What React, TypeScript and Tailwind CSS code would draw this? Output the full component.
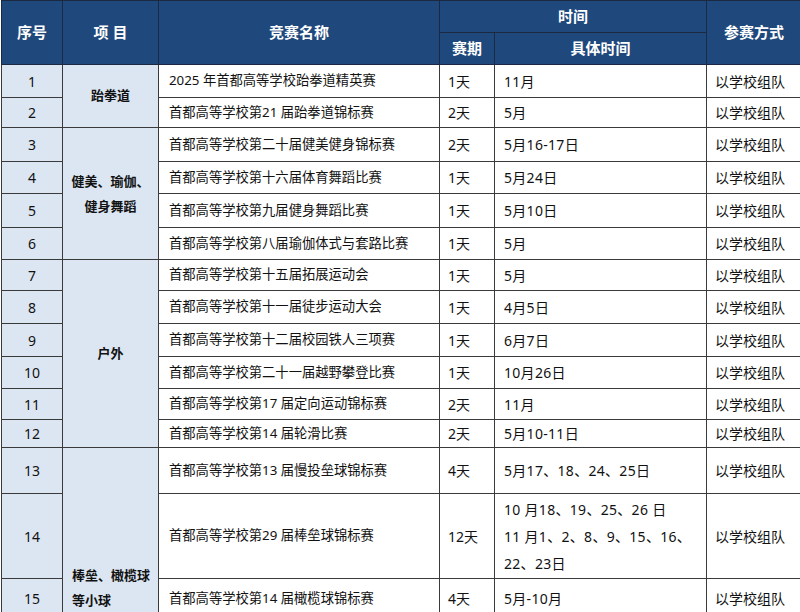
import React from 'react';

type Row = {
  no: number;
  name: string;
  days: string;
  time: React.ReactNode;
  h: string;
};

const rows: Row[] = [
  { no: 1, name: '2025 年首都高等学校跆拳道精英赛', days: '1天', time: '11月', h: 'h-[33px]' },
  { no: 2, name: '首都高等学校第21 届跆拳道锦标赛', days: '2天', time: '5月', h: 'h-[30px]' },
  { no: 3, name: '首都高等学校第二十届健美健身锦标赛', days: '2天', time: '5月16-17日', h: 'h-[34px]' },
  { no: 4, name: '首都高等学校第十六届体育舞蹈比赛', days: '1天', time: '5月24日', h: 'h-[32px]' },
  { no: 5, name: '首都高等学校第九届健身舞蹈比赛', days: '1天', time: '5月10日', h: 'h-[34px]' },
  { no: 6, name: '首都高等学校第八届瑜伽体式与套路比赛', days: '1天', time: '5月', h: 'h-[32px]' },
  { no: 7, name: '首都高等学校第十五届拓展运动会', days: '1天', time: '5月', h: 'h-[31px]' },
  { no: 8, name: '首都高等学校第十一届徒步运动大会', days: '1天', time: '4月5日', h: 'h-[33px]' },
  { no: 9, name: '首都高等学校第十二届校园铁人三项赛', days: '1天', time: '6月7日', h: 'h-[33px]' },
  { no: 10, name: '首都高等学校第二十一届越野攀登比赛', days: '1天', time: '10月26日', h: 'h-[32px]' },
  { no: 11, name: '首都高等学校第17 届定向运动锦标赛', days: '2天', time: '11月', h: 'h-[31px]' },
  { no: 12, name: '首都高等学校第14 届轮滑比赛', days: '2天', time: '5月10-11日', h: 'h-[28px]' },
  { no: 13, name: '首都高等学校第13 届慢投垒球锦标赛', days: '4天', time: '5月17、18、24、25日', h: 'h-[46px]' },
  {
    no: 14,
    name: '首都高等学校第29 届棒垒球锦标赛',
    days: '12天',
    time: (
      <div className="leading-[27px]">
        <div>10 月18、19、25、26 日</div>
        <div>11 月1、2、8、9、15、16、</div>
        <div>22、23日</div>
      </div>
    ),
    h: 'h-[85px]',
  },
  { no: 15, name: '首都高等学校第14 届橄榄球锦标赛', days: '4天', time: '5月-10月', h: 'h-[40px]' },
];

const groups: Record<number, { span: number; label: React.ReactNode; cls: string }> = {
  1: { span: 2, label: '跆拳道', cls: 'text-center align-middle' },
  3: {
    span: 4,
    label: (
      <>
        健美、瑜伽、
        <br />
        健身舞蹈
      </>
    ),
    cls: 'text-center align-middle leading-[25px]',
  },
  7: { span: 6, label: '户外', cls: 'text-center align-middle' },
  13: {
    span: 3,
    label: (
      <>
        棒垒、橄榄球
        <br />
        等小球
      </>
    ),
    cls: 'text-left align-top pl-[9px] pt-[115px] leading-[25px]',
  },
};

const cell = 'border border-[#3a3a3a]';
const head = 'border border-[#1b2a40] text-white font-bold text-[15px] text-center align-middle';

export default function App() {
  return (
    <div
      className="w-[800px] h-[612px] overflow-hidden bg-white text-[#111111]"
      style={{ fontFamily: '"Noto Sans", "Noto Sans CJK SC", sans-serif' }}
    >
      <table className="table-fixed border-collapse ml-[1px] w-[806px] text-[13px]">
        <colgroup>
          <col className="w-[61px]" />
          <col className="w-[96px]" />
          <col className="w-[281px]" />
          <col className="w-[55px]" />
          <col className="w-[212px]" />
          <col className="w-[101px]" />
        </colgroup>
        <thead className="bg-[#1f487c]">
          <tr className="h-[32px]">
            <th rowSpan={2} className={head}>序号</th>
            <th rowSpan={2} className={head}>项 目</th>
            <th rowSpan={2} className={head}>竞赛名称</th>
            <th colSpan={2} className={head}>时间</th>
            <th rowSpan={2} className={`${head} pr-[6px]`}>参赛方式</th>
          </tr>
          <tr className="h-[32px]">
            <th className={head}>赛期</th>
            <th className={head}>具体时间</th>
          </tr>
        </thead>
        <tbody>
          {rows.map((r) => {
            const g = groups[r.no];
            return (
              <tr key={r.no} className={r.h}>
                <td className={`${cell} bg-[#dce6f2] text-center text-[14px]`}>{r.no}</td>
                {g && (
                  <td rowSpan={g.span} className={`${cell} bg-[#dce6f2] font-bold ${g.cls}`}>
                    {g.label}
                  </td>
                )}
                <td className={`${cell} pl-[10px] text-[13.3px] whitespace-nowrap overflow-hidden`}>{r.name}</td>
                <td className={`${cell} pl-[8px] text-[14px]`}>{r.days}</td>
                <td className={`${cell} pl-[9px] text-[14px] tracking-[0.3px]`}>{r.time}</td>
                <td className={`${cell} pl-[8px] text-[14px]`}>以学校组队</td>
              </tr>
            );
          })}
        </tbody>
      </table>
    </div>
  );
}
